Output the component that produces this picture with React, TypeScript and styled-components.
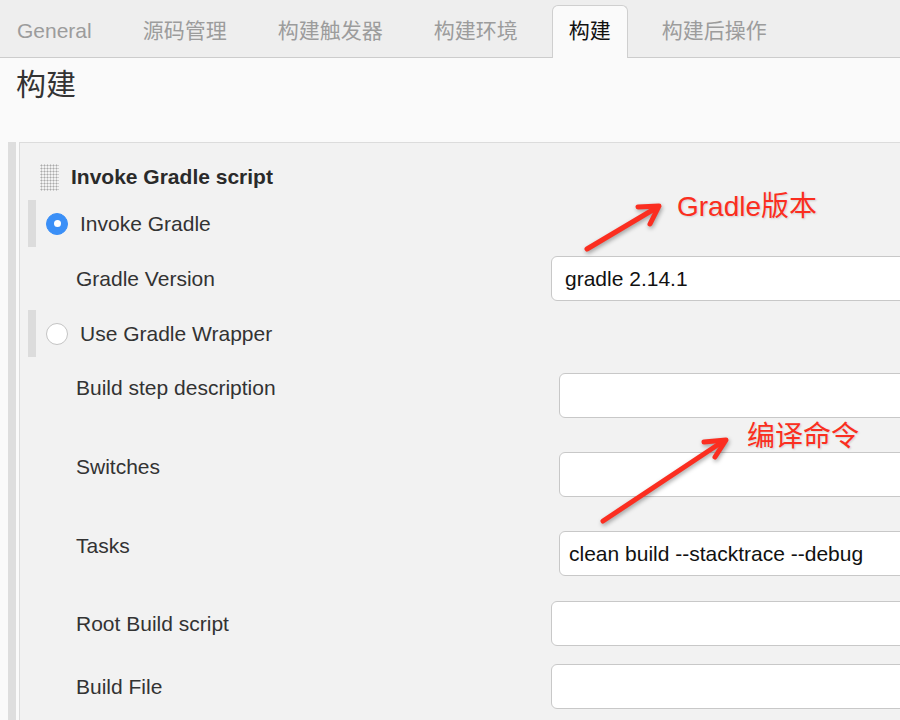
import React from "react";
import styled, { createGlobalStyle } from "styled-components";

const Global = createGlobalStyle`
  html, body { margin: 0; padding: 0; background: #fafafa; }
  body { font-family: "Liberation Sans", "Noto Sans CJK SC", sans-serif; }
  * { box-sizing: border-box; }
`;

const Page = styled.div`
  position: relative;
  width: 900px;
  height: 720px;
  overflow: hidden;
  background: #fafafa;
`;

const TabBar = styled.div`
  display: flex;
  gap: 17px;
  height: 58px;
  padding-top: 5px;
  background: #eeeeee;
  border-bottom: 1px solid #cccccc;
`;

const Tab = styled.div<{ $active?: boolean }>`
  height: 53px;
  line-height: 50px;
  padding: 0 16px;
  font-size: 21px;
  white-space: nowrap;
  color: ${(p) => (p.$active ? "#111" : "#9c9c9c")};
  background: ${(p) => (p.$active ? "#fafafa" : "transparent")};
  border: 1px solid ${(p) => (p.$active ? "#cfcfcf" : "transparent")};
  border-bottom: none;
  border-radius: 6px 6px 0 0;
`;

const Heading = styled.h1`
  margin: 8px 0 38px 16px;
  font-size: 30px;
  line-height: 38px;
  font-weight: normal;
  color: #333;
`;

const Section = styled.div`
  display: flex;
  gap: 3px;
  padding-left: 8px;
  height: 580px;
`;

const SideBar = styled.div`
  width: 8px;
  background: #dedede;
`;

const Panel = styled.div`
  flex: 1;
  background: #f2f2f2;
  border-left: 1px solid #dcdcdc;
  border-top: 1px solid #dcdcdc;
  padding-top: 20px;
`;

const PanelHeader = styled.div`
  display: flex;
  align-items: center;
  gap: 12px;
  height: 28px;
  padding-left: 20px;
`;

const DragHandle = styled.div`
  width: 19px;
  height: 27px;
  background-image: radial-gradient(circle at center, #aaaaaa 0.8px, transparent 1.2px);
  background-size: 3px 3px;
`;

const Title = styled.div`
  font-size: 21px;
  font-weight: bold;
  color: #2a2a2a;
`;

const RadioRow = styled.label`
  display: flex;
  align-items: center;
  height: 47px;
  margin: 9px 0 0 8px;
`;

const RadioBar = styled.div`
  width: 8px;
  align-self: stretch;
  background: #dcdcdc;
  margin-right: 10px;
`;

const Radio = styled.span<{ $checked?: boolean }>`
  width: 22px;
  height: 22px;
  border-radius: 50%;
  display: flex;
  align-items: center;
  justify-content: center;
  background: ${(p) => (p.$checked ? "#3a8ff7" : "#fff")};
  border: 1px solid ${(p) => (p.$checked ? "#3a8ff7" : "#c4c4c4")};
  margin-right: 12px;
  &::after {
    content: "";
    display: ${(p) => (p.$checked ? "block" : "none")};
    width: 7px;
    height: 7px;
    border-radius: 50%;
    background: #fff;
  }
`;

const RadioLabel = styled.span`
  font-size: 21px;
  color: #333;
`;

const FieldRow = styled.div<{ $top: number; $center?: boolean }>`
  display: flex;
  align-items: ${(p) => (p.$center ? "center" : "flex-start")};
  margin-top: ${(p) => p.$top}px;
  padding-left: 56px;
`;

const Label = styled.div<{ $center?: boolean }>`
  width: 475px;
  flex: none;
  font-size: 21px;
  line-height: 24px;
  color: #333;
  padding-top: ${(p) => (p.$center ? 0 : 3)}px;
`;

const Input = styled.div<{ $indent?: number; $pad?: number }>`
  flex: 1;
  height: 45px;
  margin-left: ${(p) => p.$indent ?? 0}px;
  margin-right: -30px;
  background: #fff;
  border: 1px solid #c8c8c8;
  border-radius: 6px;
  padding: 0 ${(p) => p.$pad ?? 12}px;
  display: flex;
  align-items: center;
  font-size: 21px;
  color: #111;
  white-space: nowrap;
`;

const Note = styled.div<{ $x: number; $y: number }>`
  position: absolute;
  left: ${(p) => p.$x}px;
  top: ${(p) => p.$y}px;
  font-size: 28px;
  line-height: 34px;
  color: #fb2e20;
  white-space: nowrap;
  text-shadow: 1px 1px 2px rgba(0, 0, 0, 0.15);
`;

const Overlay = styled.svg`
  position: absolute;
  left: 0;
  top: 0;
  pointer-events: none;
  filter: drop-shadow(1px 2px 2px rgba(0, 0, 0, 0.35));
`;

const tabs = ["General", "源码管理", "构建触发器", "构建环境", "构建", "构建后操作"];

export default function App() {
  return (
    <Page>
      <Global />
      <TabBar>
        {tabs.map((t) => (
          <Tab key={t} $active={t === "构建"}>
            {t}
          </Tab>
        ))}
      </TabBar>
      <Heading>构建</Heading>
      <Section>
        <SideBar />
        <Panel>
          <PanelHeader>
            <DragHandle />
            <Title>Invoke Gradle script</Title>
          </PanelHeader>
          <RadioRow>
            <RadioBar />
            <Radio $checked />
            <RadioLabel>Invoke Gradle</RadioLabel>
          </RadioRow>
          <FieldRow $top={9} $center>
            <Label $center>Gradle Version</Label>
            <Input $pad={13}>gradle 2.14.1</Input>
          </FieldRow>
          <RadioRow>
            <RadioBar />
            <Radio />
            <RadioLabel>Use Gradle Wrapper</RadioLabel>
          </RadioRow>
          <FieldRow $top={16}>
            <Label>Build step description</Label>
            <Input $indent={8} />
          </FieldRow>
          <FieldRow $top={34}>
            <Label>Switches</Label>
            <Input $indent={8} />
          </FieldRow>
          <FieldRow $top={34}>
            <Label>Tasks</Label>
            <Input $indent={8} $pad={9}>clean build --stacktrace --debug</Input>
          </FieldRow>
          <FieldRow $top={25} $center>
            <Label $center>Root Build script</Label>
            <Input />
          </FieldRow>
          <FieldRow $top={18} $center>
            <Label $center>Build File</Label>
            <Input />
          </FieldRow>
        </Panel>
      </Section>
      <Overlay width={900} height={720} viewBox="0 0 900 720">
        <g stroke="#fb2e20" strokeWidth={5} strokeLinecap="round" strokeLinejoin="round" fill="none">
          <line x1={587} y1={249} x2={656} y2={208} />
          <polyline points="638,207 659,206 650,224" />
          <line x1={603} y1={521} x2={722} y2={442} />
          <polyline points="704,442 726,440 715,457" />
        </g>
      </Overlay>
      <Note $x={677} $y={190}>Gradle版本</Note>
      <Note $x={747} $y={420}>编译命令</Note>
    </Page>
  );
}
